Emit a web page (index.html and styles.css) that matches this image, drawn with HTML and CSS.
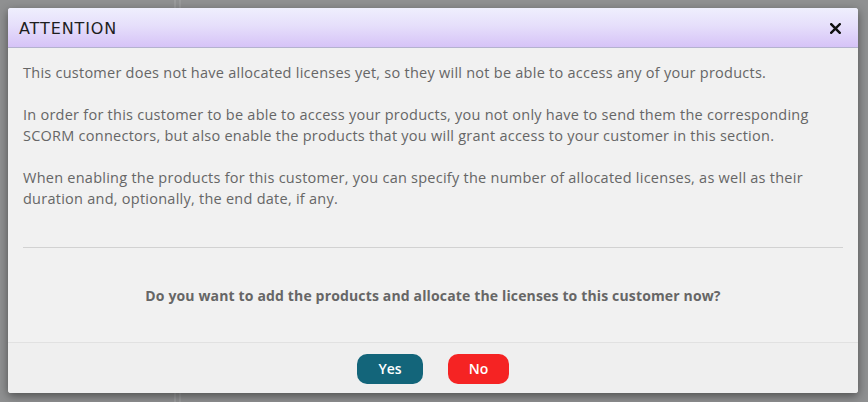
FILE: index.html
```html
<!DOCTYPE html>
<html>
<head>
<meta charset="utf-8">
<link rel="stylesheet" href="styles.css">
</head>
<body>
<div class="backdrop">
  <div class="dialog">
    <div class="header">
      <span class="title">ATTENTION</span>
      <button class="close" aria-label="Close">
        <svg width="11" height="11" viewBox="0 0 11 11"><path d="M1.2 1.2 L9.8 9.8 M9.8 1.2 L1.2 9.8" stroke="#111" stroke-width="2.4" stroke-linecap="square"/></svg>
      </button>
    </div>
    <div class="content">
      <p>This customer does not have allocated licenses yet, so they will not be able to access any of your products.</p>
      <p>In order for this customer to be able to access your products, you not only have to send them the corresponding<br>SCORM connectors, but also enable the products that you will grant access to your customer in this section.</p>
      <p>When enabling the products for this customer, you can specify the number of allocated licenses, as well as their<br>duration and, optionally, the end date, if any.</p>
      <hr class="divider">
      <p class="question">Do you want to add the products and allocate the licenses to this customer now?</p>
    </div>
    <div class="footer">
      <button class="btn btn-yes">Yes</button>
      <button class="btn btn-no">No</button>
    </div>
  </div>
</div>
</body>
</html>
```
FILE: styles.css
```css
html, body {
  margin: 0;
  padding: 0;
}
body {
  width: 868px;
  height: 402px;
  overflow: hidden;
  background: #8f9091;
  font-family: "Open Sans", "Liberation Sans", sans-serif;
}
.backdrop {
  padding: 8px 10px 0 8px;
  height: 394px;
  background:
    linear-gradient(to right, transparent 174px, #9a9b9c 174px, #9a9b9c 176px, transparent 176px, transparent 179px, #999a9b 179px, #999a9b 181px, transparent 181px),
    #8f9091;
}
.dialog {
  width: 850px;
  height: 385px;
  background: #f1f1f1;
  border-radius: 3px;
  box-shadow: 0 3px 10px rgba(0,0,0,0.45);
  display: flex;
  flex-direction: column;
  overflow: hidden;
}
.header {
  height: 39px;
  flex: none;
  display: flex;
  align-items: center;
  justify-content: space-between;
  padding: 0 17px 0 11px;
  border-bottom: 1px solid #b4b2cf;
  background: linear-gradient(to bottom, #efeffd 0%, #e6dffb 45%, #d6c3f7 100%);
}
.title {
  font-family: "DejaVu Sans", sans-serif;
  font-size: 16px;
  letter-spacing: 0.9px;
  color: #1e1e1e;
  padding-top: 2px;
}
.close {
  border: 0;
  background: none;
  padding: 0;
  width: 11px;
  height: 11px;
  display: flex;
  margin-top: 2px;
}
.content {
  flex: 1;
  padding: 14px 15px 0 15px;
  color: #666;
  font-size: 14.5px;
  letter-spacing: 0.25px;
  line-height: 21px;
}
.content p {
  margin: 0 0 21px 0;
  white-space: nowrap;
}
.divider {
  border: 0;
  border-top: 1px solid #d2d2d2;
  margin: 38px 0 37px 0;
}
.content p.question {
  text-align: center;
  font-weight: 700;
  font-size: 14px;
  letter-spacing: 0.15px;
  margin: 0;
}
.footer {
  height: 49px;
  flex: none;
  border-top: 1px solid #e1e1e1;
  background: #efefef;
  display: flex;
  justify-content: center;
  align-items: center;
  gap: 25px;
  padding-top: 1px;
}
.btn {
  border: 0;
  height: 30px;
  border-radius: 10px;
  color: #fff;
  font-family: "Open Sans", "Liberation Sans", sans-serif;
  font-size: 14px;
  font-weight: 600;
  padding: 0;
}
.btn-yes {
  width: 66px;
  background: #13657a;
}
.btn-no {
  width: 61px;
  background: #f52323;
}
```
